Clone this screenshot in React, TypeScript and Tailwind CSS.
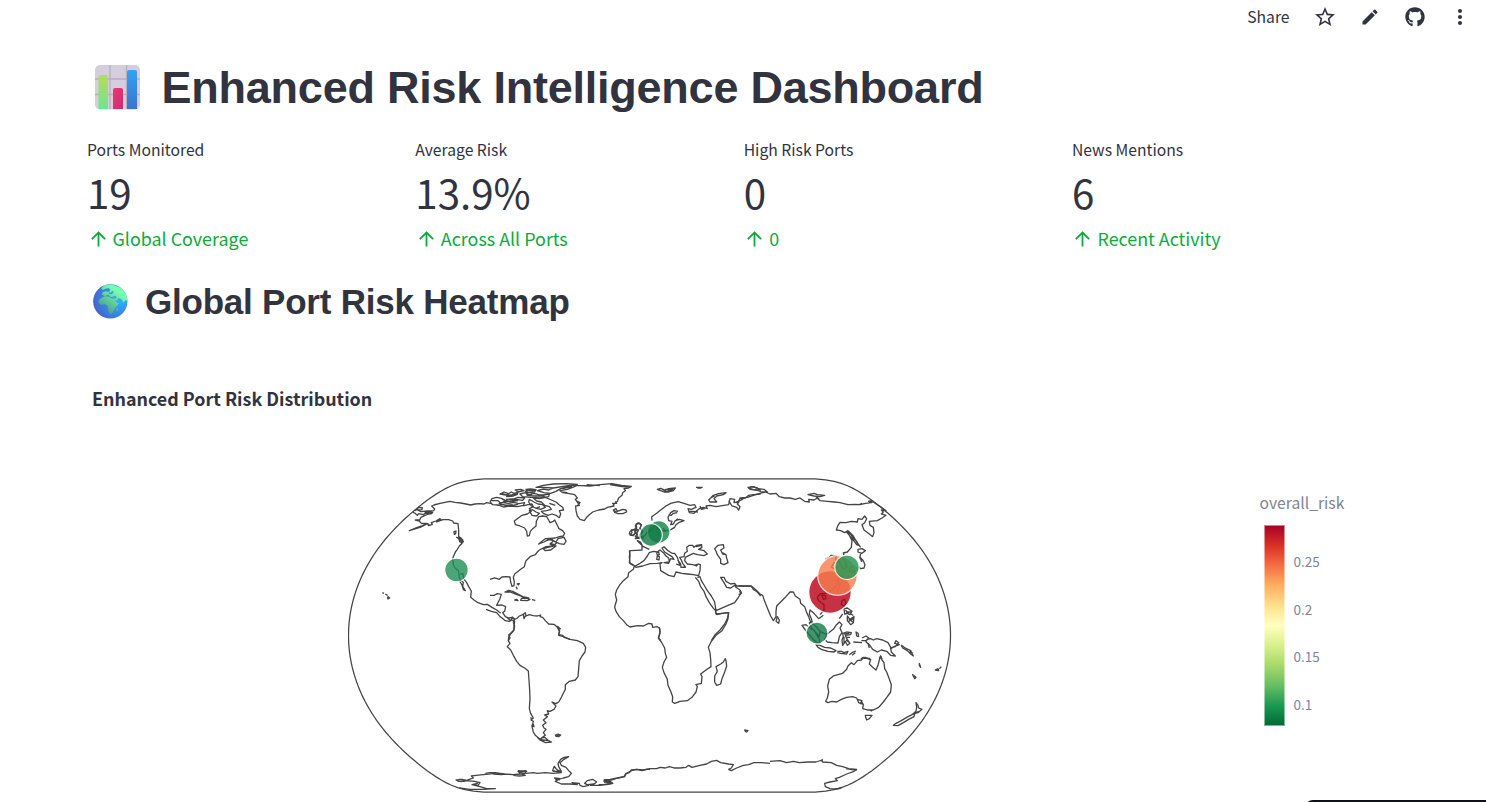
import React from "react";
import { MdStarBorder, MdEdit, MdMoreVert } from "react-icons/md";
import { FaGithub } from "react-icons/fa";

const sans = "font-['Noto_Sans_CJK_SC','Noto_Sans',sans-serif]";

const metrics = [
  { label: "Ports Monitored", value: "19", delta: "Global Coverage" },
  { label: "Average Risk", value: "13.9%", delta: "Across All Ports" },
  { label: "High Risk Ports", value: "0", delta: "0" },
  { label: "News Mentions", value: "6", delta: "Recent Activity" },
];

const ticks = ["0.25", "0.2", "0.15", "0.1"];

// Natural Earth projection of the sphere's edge.
function spherePath() {
  const k = 110.04;
  const right: string[] = [];
  const left: string[] = [];
  for (let d = -90; d <= 90; d += 2) {
    const p = (d * Math.PI) / 180;
    const p2 = p * p;
    const p4 = p2 * p2;
    const x = Math.PI * (0.8707 - 0.131979 * p2 + p4 * (-0.013791 + p4 * (0.003971 * p2 - 0.001529 * p4)));
    const y = p * (1.007226 + p2 * (0.015085 + p4 * (-0.044475 + 0.028874 * p2 - 0.005916 * p4)));
    right.push(`${(301.5 + k * x).toFixed(2)},${(157.5 + k * y).toFixed(2)}`);
    left.unshift(`${(301.5 - k * x).toFixed(2)},${(157.5 + k * y).toFixed(2)}`);
  }
  return "M" + right.concat(left).join("L") + "Z";
}

// Coastlines, grouped by region; each region has its own origin at triple scale.
const coasts = [
  {
    x: 340,
    y: 470,
    d: `M226,122L236,112L247,113L246,119L232,120L243,125L262,123L281,122L284,117L275,108L282,105L300,100L330,94L345,97L362,99L378,102L392,105L405,102L418,101L432,102L440,98L456,101
    M218,127L224,129L232,136L236,131L250,134L256,129L268,132L278,127L272,126L254,128
    M278,127L275,131L262,133L255,136L243,142L239,150L226,150L238,153L244,160L258,163L240,172L208,182L232,172L250,166L262,161L266,167L277,163L274,158L288,153L300,146L303,149L290,156L309,149L326,149L338,153L341,159L354,161L356,180L356,200L364,205L370,215L364,222L358,228L352,238L346,246L340,260L338,267L340,284L345,294L355,302L358,320L361,331L370,337L368,349L376,362L370,359L366,345L358,332M361,312L369,311L371,326L380,338L386,350L394,363L392,382L402,390L412,397L430,404L442,403L456,412L470,420L482,430
    M244,160L260,160L268,164M232,173L244,168M348,183L342,185L343,193L347,191ZM350,202L357,206L359,215L366,218L368,209L358,205ZM355,206L368,216L362,219
    M127,368L132,370M136,372L143,376M143,379L149,384L144,387L142,381`,
  },
  {
    x: 490,
    y: 470,
    d: `M0,96L6,86L20,82L34,85L46,91L38,98L56,100L72,97L86,101L104,98L100,106L82,110L58,108L40,111L24,105L8,104L0,96
    M22,106L40,104L60,108L84,103M4,92L24,92L32,99L48,95L66,92L78,88L98,91L104,84L84,82L70,87L48,88
    M30,72L42,66L56,71L48,75ZM52,74L64,66L72,70L84,67L82,73L70,78L50,80ZM76,60L92,58L102,62L84,66ZM108,58L122,57L138,59L134,66L112,68ZM90,72L106,68L116,74L132,70L146,74L160,75L178,72L176,80L150,84L122,82L98,80ZM106,62L112,76L124,74L130,64
    M34,70L56,76L80,72M108,62L134,62M110,76L136,78L164,78M36,88L60,95L84,92M26,100L46,106L68,104
    M138,52L160,46L190,42L230,41L262,43L235,50L212,56L198,64L182,70L162,68L142,62L160,57L176,60L190,54L160,52Z
    M130,84L148,86L166,82L184,90L198,96L207,104L218,112L221,120L208,122L212,132L208,143L198,136L186,132L174,136L160,130L154,124L170,122L184,118L178,110L164,106L154,96L140,93ZM118,88L132,96L144,102L158,104L166,112L152,118L136,114L124,108L116,96ZM118,122L128,119L138,126L148,130L140,138L126,136Z
    M100,108L114,104L126,102L130,110L118,116L124,124L112,132L96,136L82,146L73,153L76,164L90,168L104,174L110,184L112,198L118,197L121,184L128,176L138,168L139,154L146,140L158,138L170,140L176,150L180,158L190,154L194,150L200,162L207,176L218,182L224,190L220,198L208,200L196,204L180,205L166,206L158,212L146,222L162,216L176,208L186,206L190,214L180,222L188,226L198,228L190,234L182,240L166,242L160,236L174,232L190,228L168,230L148,240L142,246L136,254L122,259L108,272L106,278L103,290L92,298L74,312L70,322L73,336L72,347L66,349L62,336L60,321L48,320L36,321L28,328L14,324L0,328
    M204,206L222,202L228,214L222,223L208,221L198,216ZM170,212L178,209L190,212L200,218L194,224L180,220
    M262,46L300,48L330,44L365,41L395,46L424,49L416,54L402,56L406,62L398,68L396,76L386,84L382,94L370,104L372,108L352,112L344,117L326,120L308,126L298,134L290,142L283,152L270,148L262,138L258,122L257,108L268,106L262,96L256,88L262,84L254,74L238,71L218,68L210,62L232,58L248,52Z
    M190,54L240,46L262,44M218,56L246,50M214,66L232,68M366,100L380,100L376,94M258,92L270,98L262,108M178,100L196,106M136,116L150,110M360,44L395,50L420,51M290,44L330,47
    M370,120L378,116L382,124L398,118L408,120L410,126L398,131L384,131L374,127ZM370,120L380,127
    M80,342L88,341L84,346M78,350L82,358
    M45,366L56,361L68,364L84,372L98,380L116,384L104,386L92,378L72,370L60,366ZM74,390L84,392L80,388ZM94,386L108,384L120,388L112,392L92,391ZM126,389L136,391
    M0,376L12,376L22,371L34,373L29,388L22,402L20,406L36,405L47,410L44,424L38,428L46,440L56,444L66,442L72,447L80,446L88,438L100,433L106,428L108,438L118,434L130,437L142,438L152,435L150,440L158,442L166,452L176,462L192,463L202,472L208,484L206,496L224,501L240,508
    M-12,418L4,424L20,428L30,440L36,444L46,452L58,454L66,450L74,454L72,466L72,480L62,492L56,502L55,512M100,430L102,446L106,438M50,442L62,452L68,441
    M447,158L438,162L440,172L434,178L446,180L440,190L442,200L436,206L448,204L456,198L460,208M447,158L454,164L450,174L458,184L452,194M424,180L436,178L438,188L430,197L420,195L426,188Z
    M478,238L460,230L448,218L442,212L452,216L456,224L456,240L440,241L420,242L418,262L420,280L430,286`,
  },
  {
    x: 600,
    y: 470,
    d: `M88,242L90,258L88,278L98,284L106,288L120,280L132,272L142,258L148,248L160,244L172,246L180,240L190,248L198,258L206,264L208,276L192,278L206,280L212,266L222,268L216,260L206,254L194,246L186,234L192,230L204,242L216,250L224,250L232,262L236,274L242,282L243,292L256,291L248,280L244,270L239,262L252,260L254,250L262,244L260,232L268,226L278,226L282,232L290,226L304,224L306,232L296,238L312,242L322,252L312,257L292,254L280,250L266,257L256,262L254,272L262,282L278,284L290,288L294,282L301,284L300,302L296,317L280,314L262,312L246,310L228,306L222,320L206,316L192,308L182,302L180,282L186,278L172,280L150,281L128,288L108,292L103,288L100,298L86,308L84,320L70,332L60,344L50,360L46,374L50,390L44,411L48,424L58,440L70,452L80,464L90,471L112,467L130,468L146,460L156,462L158,472L172,470L179,475L180,490L176,504L182,512
    M176,246L170,248L172,256L178,254ZM172,258L170,268L177,270L178,260ZM246,292L258,292M282,286L292,283M288,230L302,227L306,223
    M114,160L124,164L120,176L126,184L120,194L116,204L106,200L112,192L104,186L110,176L106,168ZM90,184L102,178L106,186L100,196L88,192Z
    M118,206L136,196L140,188L150,184L156,178L162,170L164,162L172,166L170,176L180,180L196,184M156,152L155,140L170,130L182,120L198,108L212,100L234,95L252,100L270,106L284,104L288,112L274,118L264,116L268,128L282,130L290,122L298,116L310,112L322,116L318,108L330,106L348,110L372,106L386,104L390,86L404,88L402,98L414,96L420,86L436,84L446,76L460,74L482,72
    M386,92L396,108L410,112L416,120L420,110L412,102L418,94M300,108L304,118L314,116M266,124L280,124L294,126
    M234,124L222,122L212,128L204,142L206,152L216,154L212,164L220,162L226,152L238,148L252,152L236,158L228,164L224,172L214,178L206,182M206,134L214,136L220,130L232,128M190,174L196,184L204,180M228,150L234,146
    M172,58L182,55L194,60L206,56L226,54L220,62L204,66L192,66L182,62ZM186,58L200,64L218,58L196,58M288,52L308,52M292,54L304,54
    M326,90L340,76L356,71L378,68L370,74L350,78L342,86L350,96L330,96ZM332,84L344,78M446,54L456,50L472,54L482,60L466,60Z
    M344,236L354,226L370,224L372,234L362,240L368,252L378,254L380,264L384,278L372,284L362,280L362,268L352,254L348,244ZM366,248L376,252
    M286,322L296,334L302,350L312,364L318,380L328,398L338,412L346,421L348,432L368,430L386,428L382,446L374,462L360,480L344,496L334,512M292,322L300,320L304,332L314,348L322,362L334,378L344,396L348,422L362,416L384,406L404,398L414,384L424,368L420,360L408,352L404,346L392,354L380,352L372,338L362,322L372,322L378,334L392,342L404,340L410,348L428,348L454,349L460,358L470,364L482,378`,
  },
  {
    x: 740,
    y: 470,
    d: `M-10,96L8,88L0,84L22,82L40,76L60,70L76,66L90,72L108,70L118,80L134,84L150,84L166,88L180,84L194,94L208,96L206,88L222,90L232,84L240,92L262,94L284,96L300,98L324,104L346,103L360,104L376,100L394,98L386,94L400,96L412,104L424,112L438,122L424,120L430,126L424,132L438,136L426,144L412,152L388,154L390,166L400,172L402,188L398,200L388,192L372,180L366,164L374,158L380,146L374,138L366,148L354,146L352,156L334,154L318,158L300,157L294,166L289,180L302,182L314,188L324,182L328,196L336,212L334,232L322,246L310,249L312,256
    M24,52L40,50L54,56L72,58L82,66L66,66L48,60L30,58ZM204,74L222,70L232,74L254,76L240,80L222,78ZM228,80L238,88M384,94L396,92M358,104L366,100
    M320,186L330,190L340,204L350,214L356,226L350,224L340,210L328,196L320,186M326,184L340,198L350,216L362,232M354,238L366,236L376,242L366,250L354,246ZM362,248L360,262L370,272L375,284L372,294L362,296L356,290M358,260L366,276
    M256,268L268,262L274,256L290,258L286,268L294,276L282,278L274,292L284,296L294,290M296,270L308,262L316,276L322,290L310,298L302,286ZM330,294L344,288L352,298L340,306L328,304Z
    M298,318L294,334L290,346L282,356M282,356L268,368L254,370L240,372L232,382L236,392L252,404L252,420L240,434M246,376L256,376L258,386L250,388Z
    M-4,348L34,348L48,360L60,372L68,376L74,394L82,414L92,438L100,452L108,440L108,424L110,408L122,396L136,382L150,366L160,366L166,378L180,388L182,400L194,410L200,428L206,440L210,452L218,462L214,446L208,432L210,420L222,430L236,446L250,436M112,440L118,450L116,460L108,454ZM-4,374L4,370L-2,364
    M306,392L314,388L318,400L312,408L304,404ZM294,340L300,346L290,366
    M186,466L198,464L206,472L222,480L230,494L238,508L240,520L228,516L216,504L206,492L196,480ZM208,458L216,476L228,488L238,500L240,484L228,470L216,458ZM240,484L252,490L262,492
    M262,492L272,484L280,478L288,466L298,456L306,464L300,474L306,488L298,500L294,519L276,518L262,516L254,508L262,492
    M228,524L240,526L254,532L272,534L288,542L282,546L264,544L244,538L234,532ZM292,544L304,544L312,548L324,544L320,552L302,550L292,548M328,554L336,548L348,543M336,556L346,548
    M308,490L320,486L334,488L332,494L316,496L320,506L330,520L322,526L316,514L308,526L306,510L310,500ZM318,502L330,502M318,510L326,516M312,492L328,490M312,500L312,520
    M312,416L322,414L336,424L330,434L322,430L314,432ZM322,438L330,448L342,440L340,458L332,464L322,452ZM316,420L326,430M318,426L334,426M326,446L338,456M326,454L340,446M332,432L340,436M308,432L298,446M348,486L354,490L356,500L350,498ZM340,516L366,518M366,504L378,498L386,504L378,512L364,512M384,520L388,534
    M362,566L376,562L390,568M418,566L422,558L426,568M382,508L392,506L400,510L410,506L428,510L444,518L452,532L454,546L466,558L452,556L440,544L424,540L412,546L398,538L388,524L378,516ZM450,534L466,530L476,518L468,512L464,520L478,524L462,530L450,538M484,526L496,534L512,542L520,558L512,552L502,542L488,534ZM506,546L518,548`,
  },
  {
    x: 490,
    y: 600,
    d: `M66,50L74,58L70,66L74,78L70,92L62,100L56,104L60,114L55,122L60,130L52,140L62,150L70,166L80,184L90,196L104,204L115,213L117,240L119,270L120,296L118,326L122,340L130,354L123,360L130,364L126,380L130,396L136,406L146,414L158,420L176,422L184,426L166,428L150,420L142,412M122,352L126,362M124,376L132,380L130,372
    M205,84L209,94L206,104L218,106L222,112L240,118L262,122L280,130L287,142L285,156L276,168L268,182L266,206L264,230L256,240L238,244L226,254L226,268L220,280L212,296L206,306L198,311L186,306L192,312L198,318L192,328L180,334L172,332L176,342L164,345L172,350L160,360L168,368L158,376L162,384L168,388L160,398L166,406L154,414L164,412L176,422M196,405L204,402L212,405L206,410L198,409ZM198,408L211,404M202,78L212,88
    M-14,520L0,518L16,518L30,520L44,522L34,524L10,522M44,522L70,524L92,522L84,514L108,512L106,520L92,522L106,526L88,528L70,526M84,512L110,514L88,518M108,520L130,518L142,520L166,518L190,520L214,518L188,512L192,500L202,510L214,514L206,500L204,490L212,478L222,472L236,470L222,478L210,488L214,496L228,502L236,512L244,520L236,530L220,534L200,540L194,534L210,536L196,544L214,552L240,552L262,554L246,548L268,550L270,556L280,560L296,556L284,550L292,542L308,538L320,546L312,552L292,554M300,556L330,556L352,552L368,550L360,544L342,544L346,540L366,540L384,534L404,530L408,522L424,512L440,508L456,512L470,508L480,508M192,498L200,508L206,514L188,514M196,536L210,540`,
  },
  {
    x: 600,
    y: 540,
    d: `M178,262L180,276L175,294L184,306L194,324L196,340L200,352L192,366L187,382L192,398L202,418L204,436L212,454L218,470L217,486L224,490L240,484L262,482L276,472L288,456L292,440L288,434L304,430L306,410L302,402L318,390L333,380L332,358L330,338L325,322L334,304L348,286L366,272L378,252L384,236L386,218L366,220L350,224L346,212M376,356L370,366L362,372L348,380L352,394L344,408L344,426L350,436L362,432L366,416L374,396L380,378L378,362ZM434,570L444,572L440,576L436,574Z
    M-4,734L20,734L38,730L22,726L12,720L30,718L52,714L72,710L78,700L88,698L94,690L110,688L130,690L150,686L170,686L180,682L196,684L208,680L222,684L240,684L258,682L266,676L276,682L300,676L320,672L334,664L350,661L362,668L386,672L400,674L394,684L386,688L394,692L410,684L430,676L446,674L462,668L486,668L510,670M12,726L36,728M228,72L240,76L234,60`,
  },
  {
    x: 780,
    y: 600,
    d: `M144,308L137,304L142,294L146,276L143,258L148,238L160,228L188,220L200,208L204,198L214,188L222,194L232,182L244,180L252,172L264,176L272,178L268,192L278,202L288,210L294,196L298,180L302,168L306,180L312,188L314,206L320,216L326,232L334,254L332,276L322,290L310,306L296,322L280,330L262,330L248,326L250,314L244,304L246,312L236,308L230,294L218,290L200,292L184,298L170,306L156,304ZM232,298L246,302L240,312M246,174L270,175M270,330L276,334M256,346L266,346L276,346L268,356L260,360L257,352Z
    M408,308L414,316L416,324L426,328L414,338L404,340L402,350L386,358L370,368L354,377L340,376L348,370L364,362L380,352L396,344L408,334L410,322ZM400,344L416,334
    M418,190L422,202L418,196ZM398,224L408,232L404,236ZM466,210L474,206L476,212ZM478,206L484,200
    M-30,484L0,482L20,488L40,484L58,488L84,486L108,486L126,480L128,486L154,488L170,496L188,500L206,506L230,508L222,514L200,522L178,532L166,536L172,542L150,546L134,550L136,560L150,566L170,567L184,564M122,484L128,478M198,506L230,511`,
  },
  {
    x: 340,
    y: 720,
    d: `M466,160L430,164L408,166L394,168L400,174L388,178L372,184L356,184L348,180L366,178L378,182L404,184L420,188L414,196L398,194L412,190L396,194L420,200L440,206L466,206L430,208L390,208L358,204M356,178L376,180L362,186`,
  },
];

const ports = [
  { x: 456.5, y: 570, r: 11.8, c: "#208f57" },
  { x: 658.7, y: 532, r: 11.3, c: "#15824a" },
  { x: 651, y: 535, r: 11.3, c: "#107a45" },
  { x: 830, y: 592, r: 21.3, c: "#b80016" },
  { x: 837.5, y: 575.5, r: 19.8, c: "#f87d4c" },
  { x: 847, y: 567.3, r: 12.2, c: "#1f9650" },
  { x: 817, y: 633, r: 11, c: "#13794a" },
];

function ChartEmoji() {
  return (
    <svg className="block h-[45px] w-[45px]" viewBox="0 0 45 45">
      <defs>
        <linearGradient id="cg" x1="0" y1="0" x2="0" y2="1"><stop offset="0" stopColor="#b5dc5b" /><stop offset="1" stopColor="#6fe491" /></linearGradient>
        <linearGradient id="cp" x1="0" y1="0" x2="1" y2="1"><stop offset="0" stopColor="#f5317a" /><stop offset="1" stopColor="#c8306e" /></linearGradient>
        <linearGradient id="cb" x1="0" y1="0" x2="0" y2="1"><stop offset="0" stopColor="#32a2f5" /><stop offset="1" stopColor="#3d73cb" /></linearGradient>
        <linearGradient id="cc" x1="0" y1="0" x2="1" y2="1"><stop offset="0" stopColor="#d3cfdb" /><stop offset="1" stopColor="#d9cbe3" /></linearGradient>
      </defs>
      <rect width="45" height="44.5" rx="5" fill="url(#cc)" />
      <path d="M15 0V44M31.5 0V44M0 14H45M0 29.5H45" stroke="#b5b0bd" strokeWidth="1.3" />
      <path d="M3.500 44V12Q3.500 10 5.500 10H11Q13 10 13 12V44Z" fill="url(#cg)" />
      <path d="M18 44V25Q18 23 20 23H26Q28 23 28 25V44Z" fill="url(#cp)" />
      <path d="M32 44V7Q32 5 34 5H40Q42 5 42 7V44Z" fill="url(#cb)" />
    </svg>
  );
}

function GlobeEmoji() {
  return (
    <svg className="block h-[35px] w-[35px]" viewBox="0 0 105 105">
      <defs>
        <radialGradient id="go" cx=".8" cy=".4" r=".8"><stop offset="0" stopColor="#28b8ff" /><stop offset=".5" stopColor="#358fe9" /><stop offset="1" stopColor="#4664c9" /></radialGradient>
        <linearGradient id="gl" gradientUnits="userSpaceOnUse" x1="85" y1="10" x2="35" y2="75"><stop offset=".2" stopColor="#74ffae" /><stop offset="1" stopColor="#50a38c" /></linearGradient>
        <clipPath id="gc"><circle cx="52" cy="52" r="51.500" /></clipPath>
      </defs>
      <circle cx="52" cy="52" r="51.500" fill="url(#go)" />
      <g clipPath="url(#gc)" fill="url(#gl)">
        <path d="M38 0L60 2L105 20L105 52L98 48L92 56L84 44L76 42L72 50L64 46L60 38L52 39L46 32L36 36L27 32L29 25L38 22L46 24L52 17L46 12L38 14L30 18L24 13Z" />
        <path d="M26 41L36 37L48 38L54 43L64 45L72 56L78 57L72 66L66 71L62 80L56 90L50 90L46 78L44 65L36 61L22 62L16 54L20 46Z" />
        <path d="M70 74L75 71L75 78L71 81Z" />
      </g>
      <path d="M43 20L50 22L46 29L56 31L62 25L59 20L52 27M60 37L69 37L71 43L62 43" fill="#379deb" />
    </svg>
  );
}

export default function App() {
  return (
    <div className={`relative flex h-[802px] w-[1486px] flex-col overflow-hidden bg-white text-[#31333f] ${sans}`}>
      <header className="flex h-[34px] shrink-0 items-center justify-end pr-3.5">
        <span className="mr-[23.5px] text-[15.7px] leading-none">Share</span>
        <div className="flex items-center gap-[21px]">
          <MdStarBorder size={24} />
          <MdEdit size={20} className="mx-0.5" />
          <FaGithub size={20} className="mx-0.5" />
          <MdMoreVert size={24} />
        </div>
      </header>

      <h1 className="flex h-[106px] shrink-0 items-center pl-[95px] font-['Liberation_Sans',Arial,sans-serif] text-[45px] font-bold">
        <ChartEmoji />
        <span className="ml-[21.5px] pt-px tracking-[-0.23px] whitespace-nowrap">Enhanced Risk Intelligence Dashboard</span>
      </h1>

      <section className="ml-[87px] grid h-[126px] w-[1313.3px] shrink-0 grid-cols-4">
        {metrics.map((m) => (
          <div key={m.label} className="flex flex-col">
            <div className="h-[19px] text-[15.7px] leading-[19px]">{m.label}</div>
            <div className="mt-[3px] h-[60px] text-[40.3px] leading-[60px]">{m.value}</div>
            <div className="mt-1 flex h-6 items-center text-[17.9px] leading-6 text-[#09ab3b]">
              <svg className="mt-px mr-[7px] ml-[3.5px] h-4 w-[15px]" viewBox="0 0 15 16" fill="none" stroke="currentColor" strokeWidth="1.8">
                <path d="M7.500 15.500V2M.8 8.200L7.500 1.500L14.200 8.200" />
              </svg>
              {m.delta}
            </div>
          </div>
        ))}
      </section>

      <h2 className="flex h-[71px] shrink-0 items-center pl-[93px] font-['Liberation_Sans',Arial,sans-serif] text-[35px] font-bold">
        <GlobeEmoji />
        <span className="ml-[17px] pt-px tracking-[-0.22px] whitespace-nowrap">Global Port Risk Heatmap</span>
      </h2>

      <div className="mt-[49px] ml-[92px] h-6 shrink-0 text-[17.9px] leading-6 font-bold">Enhanced Port Risk Distribution</div>

      <div className="mt-[68px] flex h-[324px] shrink-0">
        <svg className="ml-[348px] h-[324px] w-[604px] shrink-0" viewBox="0 0 604 324" fill="none">
          <path d={spherePath()} stroke="#444" strokeWidth="1.25" />
          <g transform="translate(-348 -478)" stroke="#444" strokeLinejoin="round">
            {coasts.map((c, i) => (
              <path key={i} d={c.d} transform={`translate(${c.x} ${c.y}) scale(0.33333)`} strokeWidth="3.900" />
            ))}
          </g>
          <g transform="translate(-348 -478)">
            {ports.map((p, i) => (
              <circle key={i} cx={p.x} cy={p.y} r={p.r} fill={p.c} stroke="#fff" strokeWidth="1.250" opacity=".8" />
            ))}
          </g>
        </svg>
        <div className="ml-[307.5px] flex flex-col pt-[13px] text-[#808495]">
          <div className="h-6 text-[15.7px] leading-6">overall_risk</div>
          <div className="mt-[10px] ml-[4.5px] flex">
            <div className="h-[201px] w-[21px] border border-white/50 bg-[linear-gradient(to_top,#006837,#1a9850_10%,#66bd63_20%,#a6d96a_30%,#d9ef8b_40%,#ffffbf_50%,#fee08b_60%,#fdae61_70%,#f46d43_80%,#d73027_90%,#a50026)] bg-origin-border" />
            <div className="ml-[8.5px] flex flex-col pt-[25px] text-[13.5px]">
              {ticks.map((t) => (
                <span key={t} className="h-[47.6px] leading-[22px]">{t}</span>
              ))}
            </div>
          </div>
        </div>
      </div>

      <div className="absolute right-0 -bottom-5 h-[22px] w-[181px] rounded-tl-lg bg-[#0e1117]" />
    </div>
  );
}
